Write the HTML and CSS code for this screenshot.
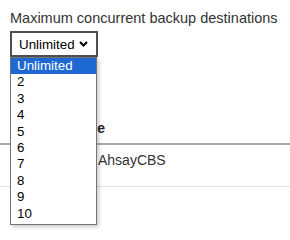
FILE: index.html
```html
<!DOCTYPE html>
<html lang="en">
<head>
  <meta charset="UTF-8" />
  <meta name="viewport" content="width=device-width, initial-scale=1.0"/>
  <title>Backup Destinations</title>
  <link rel="stylesheet" href="styles.css">
</head>
<body>
  <div class="field">
    <label class="field-label" for="maxDest">Maximum concurrent backup destinations</label>
    <div class="picker" id="maxDest">
      <div class="select">
        <span>Unlimited</span>
        <svg class="chevron" width="9" height="6" viewBox="0 0 9 6">
          <path d="M1 1 L4.5 4.5 L8 1" fill="none" stroke="#000" stroke-width="2"/>
        </svg>
      </div>
      <ul class="options">
        <li class="selected">Unlimited</li>
        <li>2</li>
        <li>3</li>
        <li>4</li>
        <li>5</li>
        <li>6</li>
        <li>7</li>
        <li>8</li>
        <li>9</li>
        <li>10</li>
      </ul>
    </div>
  </div>

  <table class="dest-table">
    <thead>
      <tr>
        <th class="col-check"></th>
        <th>Name</th>
      </tr>
    </thead>
    <tbody>
      <tr>
        <td class="col-check"></td>
        <td>
          <svg class="dest-icon" width="22" height="16" viewBox="0 0 22 16">
            <rect x="2" y="2" width="18" height="12" rx="2" fill="#4a90d9"/>
          </svg>AhsayCBS
        </td>
      </tr>
    </tbody>
  </table>
</body>
</html>
```

FILE: styles.css
```css
html, body {
  height: 100%;
}

body {
  margin: 0;
  min-height: 240px;
  font-family: "Liberation Sans", Arial, sans-serif;
  color: #333;
  background: #fff;
}

.field {
  padding: 10px 10px 0;
}

.field-label {
  display: block;
  font-size: 14.5px;
  line-height: 17px;
  margin-bottom: 4px;
}

.picker {
  position: relative;
  width: 88px;
}

.select {
  box-sizing: border-box;
  height: 26px;
  border: 2px solid #4f4f4f;
  background: #fff;
  padding: 0 8px 0 7px;
  display: flex;
  align-items: center;
  justify-content: space-between;
  font-size: 13.33px;
  color: #000;
}

.chevron {
  display: block;
}

/* open dropdown list, drawn over the table */
.options {
  position: absolute;
  top: 26px;
  left: 0;
  width: 87px;
  box-sizing: border-box;
  margin: 0;
  padding: 0 0 2px;
  list-style: none;
  background: #fff;
  border: 1px solid #767676;
  box-shadow: 2px 2px 4px rgba(0,0,0,0.22);
  font-size: 13.33px;
  color: #000;
  z-index: 2;
}

.options li {
  height: 16.4px;
  line-height: 16.4px;
  padding-left: 6px;
}

.options li.selected {
  background: #1d68d3;
  color: #fff;
}

.dest-table {
  width: 100%;
  margin-top: 55px;
  border-collapse: collapse;
  font-size: 14px;
  line-height: 16px;
}

.dest-table th {
  text-align: left;
  font-weight: bold;
  color: #222;
  padding: 8px 10px 7px;
  border-bottom: 2px solid #aaa;
}

.dest-table td {
  vertical-align: top;
  padding: 7px 10px 18px;
  border-bottom: 1px solid #e3e3e3;
}

.dest-table .col-check {
  width: 37px;
}

.dest-icon {
  vertical-align: -3px;
  margin-right: 9px;
}
```
